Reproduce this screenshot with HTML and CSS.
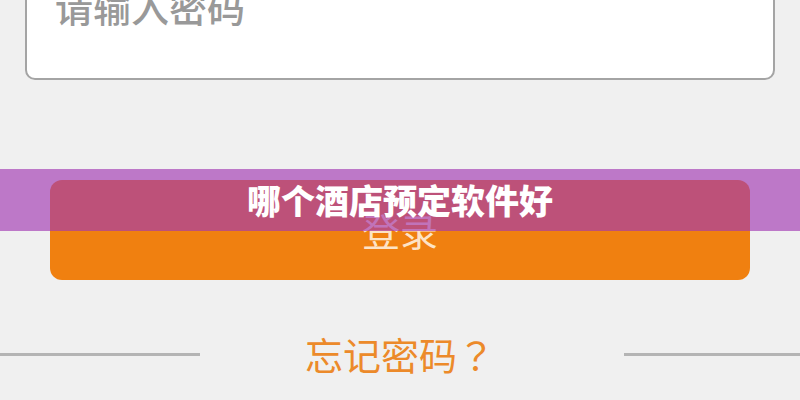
FILE: index.html
```html
<!DOCTYPE html>
<html lang="zh-CN">
<head>
<meta charset="utf-8">
<meta name="viewport" content="width=device-width, initial-scale=1">
<title>哪个酒店预定软件好</title>
<link rel="stylesheet" href="styles.css">
</head>
<body>
<main class="login">
<form class="form">
<input class="password" type="password" placeholder="请输入密码" aria-label="请输入密码">
<button class="submit" type="button">登录</button>
</form>
<div class="forgot"><a class="forgot-link" href="#">忘记密码<span class="mark" lang="zh-TW">？</span></a></div>
<h1 class="banner">哪个酒店预定软件好</h1>
</main>
</body>
</html>
```
FILE: styles.css
```css
* {
  box-sizing: border-box;
}

body {
  margin: 0;
  background: #f0f0f0;
  font-family: "Noto Sans CJK SC", sans-serif;
}

.login {
  position: relative;
  height: 100vh;
  overflow: hidden;
}

.form {
  display: flex;
  flex-direction: column;
  gap: 100px;
  margin-top: -60px;
  padding: 0 25px;
}

.password {
  width: 100%;
  height: 140px;
  padding: 0 28px 10px;
  border: 2px solid #a4a4a4;
  border-radius: 10px;
  background: #fff;
  font: 500 38px/56px "Noto Sans CJK SC", sans-serif;
}

.password::placeholder {
  color: #999;
  opacity: 1;
}

.submit {
  height: 100px;
  margin: 0 25px;
  padding: 0;
  border: 0;
  border-radius: 12px;
  background: #f08010;
  color: #fde3c6;
  font: 400 38px/56px "Noto Sans CJK SC", sans-serif;
}

.forgot {
  display: grid;
  grid-template-columns: 25fr 50fr 3fr 22fr;
  align-items: center;
  margin-top: 46px;
}

.forgot::before,
.forgot::after {
  content: "";
  height: 3px;
  background: #b4b4b4;
}

.forgot::after {
  grid-column: 4;
}

.forgot-link {
  justify-self: center;
  color: #ec8a2a;
  font-size: 38px;
  line-height: 56px;
  text-decoration: none;
}

.mark {
  font-family: "Noto Sans CJK TC", sans-serif;
}

.banner {
  position: absolute;
  top: 169px;
  left: 0;
  right: 0;
  height: 62px;
  margin: 0;
  background: rgba(161, 55, 178, 0.65);
  color: #fff;
  font-size: 34px;
  font-weight: 900;
  line-height: 62px;
  text-align: center;
}
```
